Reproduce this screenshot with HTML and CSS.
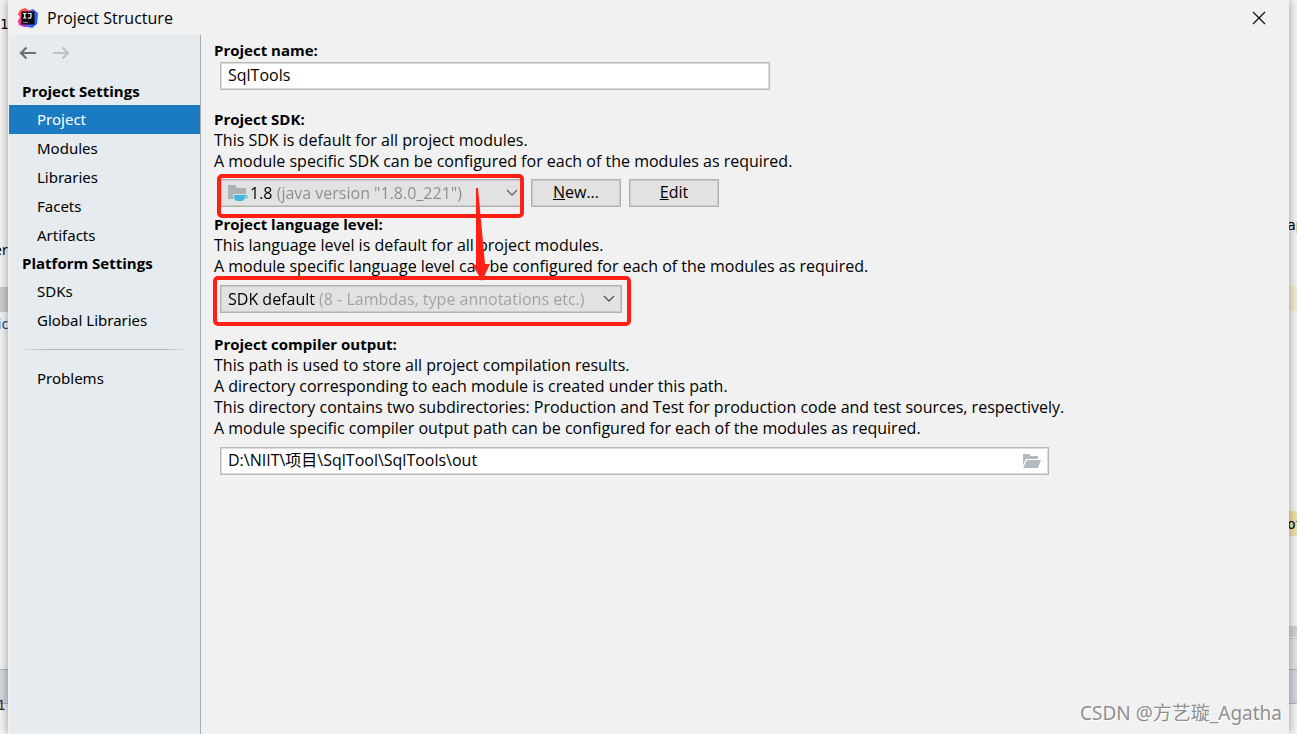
FILE: index.html
```html
<!DOCTYPE html>
<html lang="en">
<head>
    <meta charset="UTF-8">
    <title>Project Structure</title>
    <link rel="stylesheet" href="styles.css">
</head>
<body>
    <!-- editor window behind the dialog -->
    <div class="editor" aria-hidden="true">
        <span class="code line-no">1</span>
        <span class="code frag-er">er</span>
        <span class="band band-gray"></span>
        <span class="code frag-ric">ric</span>
        <span class="code frag-ap">a<b>p</b></span>
        <span class="band band-cream"></span>
        <span class="band band-yellow"></span>
        <span class="code frag-ot">ot</span>
        <span class="band band-scroll"></span>
        <span class="band band-panel"></span>
        <span class="band band-status"></span>
        <span class="code frag-bottom">1:</span>
    </div>

    <div class="dialog">
        <header class="titlebar">
            <svg class="logo" width="20" height="20" viewBox="0 0 20 20">
                <defs>
                    <linearGradient id="pink" x1="0" y1="0" x2="0.4" y2="1">
                        <stop offset="0" stop-color="#ff6d3f"/>
                        <stop offset="0.6" stop-color="#fe2d73"/>
                        <stop offset="1" stop-color="#c43bd8"/>
                    </linearGradient>
                    <linearGradient id="blue" x1="0" y1="0" x2="1" y2="1">
                        <stop offset="0" stop-color="#a244e0"/>
                        <stop offset="0.5" stop-color="#2b6cf0"/>
                        <stop offset="1" stop-color="#2a52e8"/>
                    </linearGradient>
                </defs>
                <path d="M10 3L15 1L20 5L19 16L14 20L8 17Z" fill="url(#blue)"/>
                <path d="M2 2L7 0L12 3L11 15L8 17L6 19L1 17L0 13L2 9L0 6Z" fill="url(#pink)"/>
                <path d="M7 16L14 20L10 19L6 19Z" fill="#7b4bea"/>
                <path d="M3.500 3.500H16.500V16.500H3.500Z" fill="#0b0b10"/>
                <path d="M5 5.500H8.500M6.750 5.500V10M5 10H8.500M10 5.500H13V9Q13 10.200 11.800 10.200H10" fill="none" stroke="#fff" stroke-width="1.200"/>
                <path d="M5 14.500H10" stroke="#888" stroke-width="1"/>
            </svg>
            <h1>Project Structure</h1>
            <button class="close" type="button" aria-label="Close">
                <svg width="14" height="14" viewBox="0 0 14 14">
                    <path d="M1 1L13 13M13 1L1 13" stroke="#111" stroke-width="1.300" fill="none"/>
                </svg>
            </button>
        </header>

        <div class="body">
            <nav class="sidebar">
                <div class="history">
                    <button type="button" aria-label="Back">
                        <svg width="18" height="14" viewBox="0 0 18 14">
                            <path d="M17 7H2M7.500 1.500L2 7L7.500 12.500" stroke="#6e6e6e" stroke-width="2.200" fill="none"/>
                        </svg>
                    </button>
                    <button type="button" aria-label="Forward" disabled>
                        <svg width="18" height="14" viewBox="0 0 18 14">
                            <path d="M1 7H16M10.500 1.500L16 7L10.500 12.500" stroke="#bfc0c1" stroke-width="2.200" fill="none"/>
                        </svg>
                    </button>
                </div>
                <h2>Project Settings</h2>
                <a href="#project" class="active">Project</a>
                <a href="#modules">Modules</a>
                <a href="#libraries">Libraries</a>
                <a href="#facets">Facets</a>
                <a href="#artifacts">Artifacts</a>
                <h2>Platform Settings</h2>
                <a href="#sdks">SDKs</a>
                <a href="#global">Global Libraries</a>
                <hr>
                <a href="#problems">Problems</a>
            </nav>

            <main class="content">
                <section>
                    <label class="title" for="name">Project name:</label>
                    <input class="field name" id="name" type="text" value="SqlTools">
                </section>

                <section class="sdk-section">
                    <label class="title" for="sdk">Project SDK:</label>
                    <p>This SDK is default for all project modules.</p>
                    <p>A module specific SDK can be configured for each of the modules as required.</p>
                    <div class="row">
                        <div class="combo sdk">
                            <svg width="20" height="18" viewBox="0 0 20 18">
                                <path d="M0 1H7L9 4H18V15H0Z" fill="#a7b1b8"/>
                                <path d="M5 10H20V15H17Q16 18 13 18H9Q5 16 5 10Z" fill="#e2e2e2"/>
                                <path d="M6 11H17Q17 17 13 17H10Q6 17 6 11Z" fill="#40b6e0"/>
                                <path d="M16 11.500H19V14H16" fill="none" stroke="#40b6e0"/>
                            </svg>
                            <select id="sdk">
                                <option>1.8 (java version "1.8.0_221")</option>
                            </select>
                            <svg class="chevron" width="12" height="8" viewBox="0 0 12 8">
                                <path d="M1 1L6 6L11 1" fill="none" stroke="#666" stroke-width="1.300"/>
                            </svg>
                        </div>
                        <button class="btn" type="button"><u>N</u>ew...</button>
                        <button class="btn" type="button"><u>E</u>dit</button>
                    </div>
                </section>

                <section class="level-section">
                    <label class="title" for="level">Project language level:</label>
                    <p>This language level is default for all project modules.</p>
                    <p>A module specific language level can be configured for each of the modules as required.</p>
                    <div class="row">
                        <div class="combo level">
                            <select id="level">
                                <option>SDK default (8 - Lambdas, type annotations etc.)</option>
                            </select>
                            <svg class="chevron" width="12" height="8" viewBox="0 0 12 8">
                                <path d="M1 1L6 6L11 1" fill="none" stroke="#555" stroke-width="1.300"/>
                            </svg>
                        </div>
                    </div>
                </section>

                <section>
                    <label class="title" for="out">Project compiler output:</label>
                    <p>This path is used to store all project compilation results.</p>
                    <p>A directory corresponding to each module is created under this path.</p>
                    <p>This directory contains two subdirectories: Production and Test for production code and test sources, respectively.</p>
                    <p>A module specific compiler output path can be configured for each of the modules as required.</p>
                    <div class="field path">
                        <input id="out" type="text" value="D:\NIIT\项目\SqlTool\SqlTools\out">
                        <button type="button" aria-label="Browse">
                            <svg width="20" height="16" viewBox="0 0 20 16">
                                <path d="M1 1H7L9 3H16V6H4L1 12Z" fill="#b4bbc0"/>
                                <path d="M5 7H19L16 15H1Z" fill="#b4bbc0"/>
                            </svg>
                        </button>
                    </div>
                </section>

                <!-- red marker boxes and the arrow between them -->
                <svg class="marks" width="440" height="160" viewBox="0 0 440 160">
                    <rect x="8" y="5" width="303" height="40" rx="3" fill="none" stroke="#ff2015" stroke-width="4"/>
                    <rect x="4" y="107" width="414" height="46" rx="3" fill="none" stroke="#ff2015" stroke-width="4"/>
                    <path d="M265 17L267 17L274 93L279 93L271 110L261 93L265 94Z" fill="#ff2015"/>
                </svg>
            </main>
        </div>
    </div>

    <div class="watermark">CSDN @方艺璇_Agatha</div>
</body>
</html>
```

FILE: styles.css
```css
* {
    box-sizing: border-box;
}
body {
    margin: 0;
    min-height: 100vh;
    overflow: hidden;
    position: relative;
    display: flex;
    font-family: 'Open Sans', 'Noto Sans CJK SC', sans-serif;
    font-size: 16px;
    color: #000;
    background: #f6f6f6;
}
button, input, select {
    font: inherit;
    color: inherit;
}
h1, h2, p {
    margin: 0;
}

/* editor behind */
.editor {
    position: absolute;
    inset: 0;
    overflow: hidden;
}
.code, .band {
    position: absolute;
}
.code {
    font-family: 'DejaVu Sans Mono', monospace;
    font-size: 14px;
    line-height: 20px;
}
.code b {
    font-weight: 400;
    color: #b36a00;
}
.line-no { left: 0; top: 14px; }
.frag-er, .frag-ric { font-family: 'Noto Sans', sans-serif; }
.frag-er { left: -6px; top: 240px; }
.frag-ric { left: -8px; top: 314px; color: #1f3a93; }
.frag-ap { right: -7px; top: 215px; }
.frag-ot { right: -7px; top: 514px; }
.frag-bottom { left: -3px; top: 695px; color: #402020; }
.band-gray { left: 0; width: 9px; top: 287px; height: 25px; background: #cfcfcf; }
.band-cream { right: 0; width: 9px; top: 286px; height: 25px; background: #f6eed0; }
.band-yellow { right: 0; width: 9px; top: 511px; height: 25px; background: #efe3a6; }
.band-scroll { right: 0; width: 9px; top: 626px; height: 11px; background: #d4d4d4; }
.band-panel { right: 0; width: 9px; top: 638px; height: 31px; background: #e6e6e6; border-top: 1px solid #c8c8c8; }
.band-status { left: 0; right: 0; top: 669px; height: 35px; background: #d3d9e0; border: 1px solid #b4b8bc; border-width: 1px 0; }

/* dialog */
.dialog {
    position: relative;
    flex: 1;
    min-width: 0;
    margin: 0 8px;
    padding-left: 1px;
    display: flex;
    flex-direction: column;
    background: #f1f1f1;
    box-shadow: 0 0 10px rgba(0,0,0,0.4);
}
.titlebar {
    height: 35px;
    display: flex;
    align-items: center;
    padding: 0 23px 0 9px;
}
.titlebar h1 {
    flex: 1;
    margin-left: 9px;
    font-size: 16px;
    font-weight: 400;
}
.close, .history button, .path button {
    display: flex;
    padding: 0;
    border: none;
    background: none;
}
.body {
    flex: 1;
    display: flex;
}
.sidebar {
    width: 192px;
    background: #e6ebef;
    border-right: 1px solid #aaa;
    font-family: 'Noto Sans', sans-serif;
    font-size: 15px;
    line-height: 29px;
}
.history {
    display: flex;
    gap: 15px;
    padding: 11px 10px 18px;
}
.sidebar h2 {
    padding-left: 13px;
    font-family: 'Open Sans', sans-serif;
    font-size: 15px;
    font-weight: 700;
    line-height: 27px;
}
.sidebar a {
    display: block;
    padding-left: 28px;
    color: #000;
    text-decoration: none;
}
.sidebar a.active {
    background: #1a7bc2;
    color: #fff;
}
.sidebar hr {
    height: 1px;
    margin: 14px 9px;
    border: none;
    background: linear-gradient(90deg, transparent, #b4b8bb 15%, #b4b8bb 85%, transparent);
}

/* right side */
.content {
    position: relative;
    flex: 1;
    padding: 5px 13px;
    line-height: 21px;
}
.content section {
    margin-bottom: 19px;
}
.content .sdk-section {
    margin-bottom: 7px;
}
.content .level-section {
    margin-bottom: 21px;
}
.title {
    display: block;
    font-size: 15px;
    font-weight: 700;
}
.field {
    width: 550px;
    height: 28px;
    border: 1px solid #b8b8b8;
    box-shadow: inset 0 0 0 1px #dcdcdc;
    background: #fff;
}
.name {
    display: block;
    margin: 1px 6px 0;
    padding: 0 7px 2px;
}
.path {
    width: 829px;
    margin: 8px 6px 0;
    padding: 0 6px 0 7px;
    display: flex;
    align-items: center;
}
.path input {
    flex: 1;
    padding: 0 0 1px;
    border: none;
    background: none;
    outline: none;
}
.row {
    display: flex;
    gap: 8px;
    margin: 7px 6px 0;
}
.combo {
    display: flex;
    align-items: center;
    height: 28px;
    padding: 0 6px 0 7px;
    border: 1px solid #b0b0b0;
    box-shadow: inset 0 0 0 1px #cacaca;
    background: #e2e2e2;
}
.combo select {
    flex: 1;
    min-width: 0;
    padding: 0;
    border: none;
    outline: none;
    appearance: none;
    /* value in black, the hint after it in gray */
    color: transparent;
    background: linear-gradient(90deg, #000 var(--value), #8c8c8c var(--value));
    -webkit-background-clip: text;
    background-clip: text;
}
.sdk {
    width: 303px;
    padding-right: 4px;
}
.sdk select {
    --value: 24px;
    margin-left: 2px;
}
.level {
    width: 402px;
    margin-top: 1px;
}
.level select {
    --value: 89px;
    background-image: linear-gradient(90deg, #000 var(--value), #a0a0a0 var(--value));
}
.btn {
    width: 90px;
    height: 28px;
    padding: 0 0 1px;
    border: 1px solid #b0b0b0;
    box-shadow: inset 0 0 0 1px #cacaca;
    background: #e2e2e2;
}
.marks {
    position: absolute;
    left: 10px;
    top: 136px;
    pointer-events: none;
}

.watermark {
    position: absolute;
    right: 15px;
    bottom: 6px;
    font-family: 'Noto Sans', 'Noto Sans CJK SC', sans-serif;
    font-size: 19px;
    line-height: 30px;
    color: #8f8f8f;
    text-shadow: 1px 1px 0 #fff;
}
```
